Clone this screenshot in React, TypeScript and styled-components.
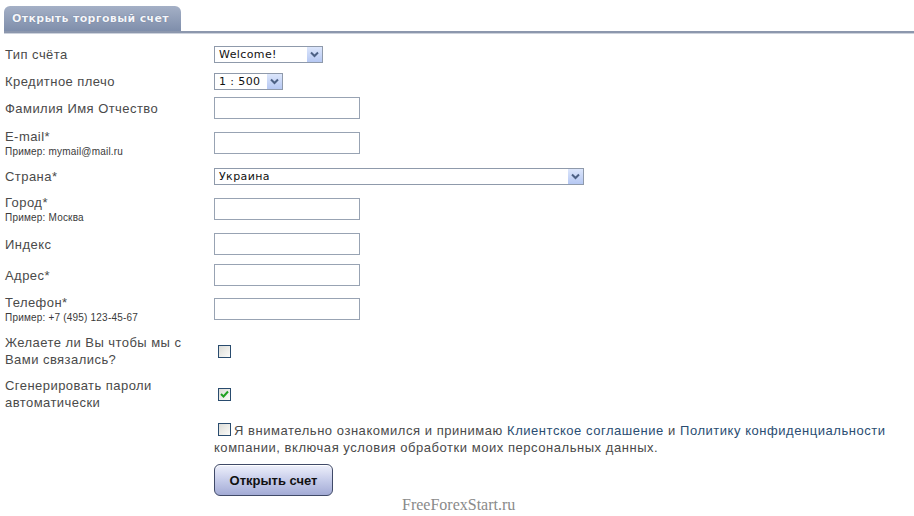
import React from 'react';
import styled, { createGlobalStyle } from 'styled-components';

const GlobalStyle = createGlobalStyle`
  html, body {
    margin: 0;
    padding: 0;
    background: #fff;
  }
  body {
    font-family: "Liberation Sans", Arial, sans-serif;
    color: #4a4a4a;
  }
`;

const Page = styled.div`
  width: 914px;
  height: 516px;
  overflow: hidden;
  box-sizing: border-box;
  padding-top: 6px;
`;

const TabBar = styled.div`
  display: flex;
  margin-left: 4px;
  border-bottom: 2px solid #8c97ad;
  box-shadow: 0 1px 0 #cdd2dc;
`;

const Tab = styled.div`
  width: 177px;
  box-sizing: border-box;
  height: 25px;
  padding: 0 0 0 8px;
  display: flex;
  align-items: center;
  border-radius: 6px 6px 0 0;
  background: linear-gradient(#a4b0c6, #7f8eab);
  color: #f4f6fb;
  font-family: "DejaVu Sans", Verdana, sans-serif;
  font-size: 11px;
  font-weight: bold;
  letter-spacing: 0.35px;
  text-shadow: 0 0 1px #56627c;
`;

const Form = styled.div`
  display: flex;
  flex-direction: column;
  padding-top: 8px;
`;

const Row = styled.div<{ $h: number }>`
  display: grid;
  grid-template-columns: 209px 1fr;
  align-items: center;
  height: ${({ $h }) => $h}px;
  padding-left: 5px;
`;

const LabelCell = styled.div`
  display: flex;
  flex-direction: column;
  font-size: 13px;
  line-height: 17px;
  letter-spacing: 0.45px;
`;

const Hint = styled.span`
  font-size: 10px;
  line-height: 13px;
  letter-spacing: 0.2px;
  color: #3a3a3a;
`;

const TextInput = styled.div`
  width: 144px;
  height: 20px;
  border: 1px solid #98a3b3;
  background: #fff;
`;

const SelectBox = styled.div<{ $w: number }>`
  width: ${({ $w }) => $w}px;
  height: 15px;
  border: 1px solid #8f9aab;
  display: flex;
  align-items: center;
  justify-content: space-between;
  padding-left: 4px;
  box-sizing: content-box;
  font-family: "DejaVu Sans", Verdana, sans-serif;
  font-size: 11px;
  letter-spacing: 0.4px;
  color: #111;
`;

const SelectArrow = styled.div`
  width: 15px;
  height: 15px;
  background: linear-gradient(#dce6fb, #b6c8f3);
  border-left: 1px solid #fff;
  display: flex;
  align-items: center;
  justify-content: center;
`;

const Check = styled.div<{ $checked?: boolean }>`
  width: 11px;
  height: 11px;
  margin-left: 4px;
  border: 1px solid #294b6e;
  background: linear-gradient(135deg, #dcdcd7, #fbfbf8);
  display: flex;
  align-items: center;
  justify-content: center;
  flex-shrink: 0;
`;

const Agreement = styled.div`
  margin-left: 214px;
  margin-top: 9px;
  font-size: 13px;
  line-height: 17px;
  letter-spacing: 0.54px;
`;

const InlineCheck = styled(Check)`
  display: inline-flex;
  vertical-align: -1px;
  margin-right: 3px;
`;

const DocLink = styled.span`
  color: #2a4d72;
`;

const SubmitButton = styled.button`
  margin: 8px 0 0 214px;
  width: 119px;
  height: 32px;
  border: 1px solid #404a68;
  border-radius: 6px;
  background: linear-gradient(#eef0fb, #c3c9e8 55%, #a3abd5);
  box-shadow: inset 0 1px 0 #fff;
  font-family: "Liberation Sans", Arial, sans-serif;
  font-size: 13px;
  font-weight: bold;
  color: #111;
  cursor: pointer;
`;

const Watermark = styled.div`
  margin-left: 402px;
  font-family: "Liberation Serif", "Times New Roman", serif;
  font-size: 16px;
  line-height: 17px;
  color: #8a8a8a;
`;

const Chevron = () => (
  <svg width="9" height="7" viewBox="0 0 9 7">
    <path d="M1 1.5 L4.5 5 L8 1.5" fill="none" stroke="#4d6185" strokeWidth="2" />
  </svg>
);

const Tick = () => (
  <svg width="9" height="8" viewBox="0 0 9 8">
    <path d="M1 4 L3.5 6.5 L8 1.5" fill="none" stroke="#21a121" strokeWidth="2" />
  </svg>
);

const Select: React.FC<{ value: string; width: number }> = ({ value, width }) => (
  <SelectBox $w={width}>
    <span>{value}</span>
    <SelectArrow>
      <Chevron />
    </SelectArrow>
  </SelectBox>
);

type Field =
  | { kind: 'input' }
  | { kind: 'select'; value: string; width: number }
  | { kind: 'check'; checked?: boolean };

interface RowDef {
  label: string[];
  hint?: string;
  field: Field;
  h: number;
}

const rows: RowDef[] = [
  { label: ['Тип счёта'], field: { kind: 'select', value: 'Welcome!', width: 103 }, h: 27 },
  { label: ['Кредитное плечо'], field: { kind: 'select', value: '1 : 500', width: 63 }, h: 26 },
  { label: ['Фамилия Имя Отчество'], field: { kind: 'input' }, h: 28 },
  { label: ['E-mail*'], hint: 'Пример: mymail@mail.ru', field: { kind: 'input' }, h: 42 },
  { label: ['Страна*'], field: { kind: 'select', value: 'Украина', width: 364 }, h: 25 },
  { label: ['Город*'], hint: 'Пример: Москва', field: { kind: 'input' }, h: 40 },
  { label: ['Индекс'], field: { kind: 'input' }, h: 30 },
  { label: ['Адрес*'], field: { kind: 'input' }, h: 32 },
  { label: ['Телефон*'], hint: 'Пример: +7 (495) 123-45-67', field: { kind: 'input' }, h: 36 },
  { label: ['Желаете ли Вы чтобы мы с', 'Вами связались?'], field: { kind: 'check' }, h: 48 },
  { label: ['Сгенерировать пароли', 'автоматически'], field: { kind: 'check', checked: true }, h: 38 },
];

const renderField = (f: Field) => {
  if (f.kind === 'input') return <TextInput />;
  if (f.kind === 'select') return <Select value={f.value} width={f.width} />;
  return <Check $checked={f.checked}>{f.checked && <Tick />}</Check>;
};

const App: React.FC = () => (
  <Page>
    <GlobalStyle />
    <TabBar>
      <Tab>Открыть торговый счет</Tab>
    </TabBar>
    <Form>
      {rows.map((r, i) => (
        <Row key={i} $h={r.h}>
          <LabelCell>
            {r.label.map((l) => (
              <span key={l}>{l}</span>
            ))}
            {r.hint && <Hint>{r.hint}</Hint>}
          </LabelCell>
          <div>{renderField(r.field)}</div>
        </Row>
      ))}
    </Form>
    <Agreement>
      <InlineCheck />
      Я внимательно ознакомился и принимаю <DocLink>Клиентское соглашение</DocLink> и{' '}
      <DocLink>Политику конфиденциальности</DocLink>
      <br />
      компании, включая условия обработки моих персональных данных.
    </Agreement>
    <SubmitButton>Открыть счет</SubmitButton>
    <Watermark>FreeForexStart.ru</Watermark>
  </Page>
);

export default App;
